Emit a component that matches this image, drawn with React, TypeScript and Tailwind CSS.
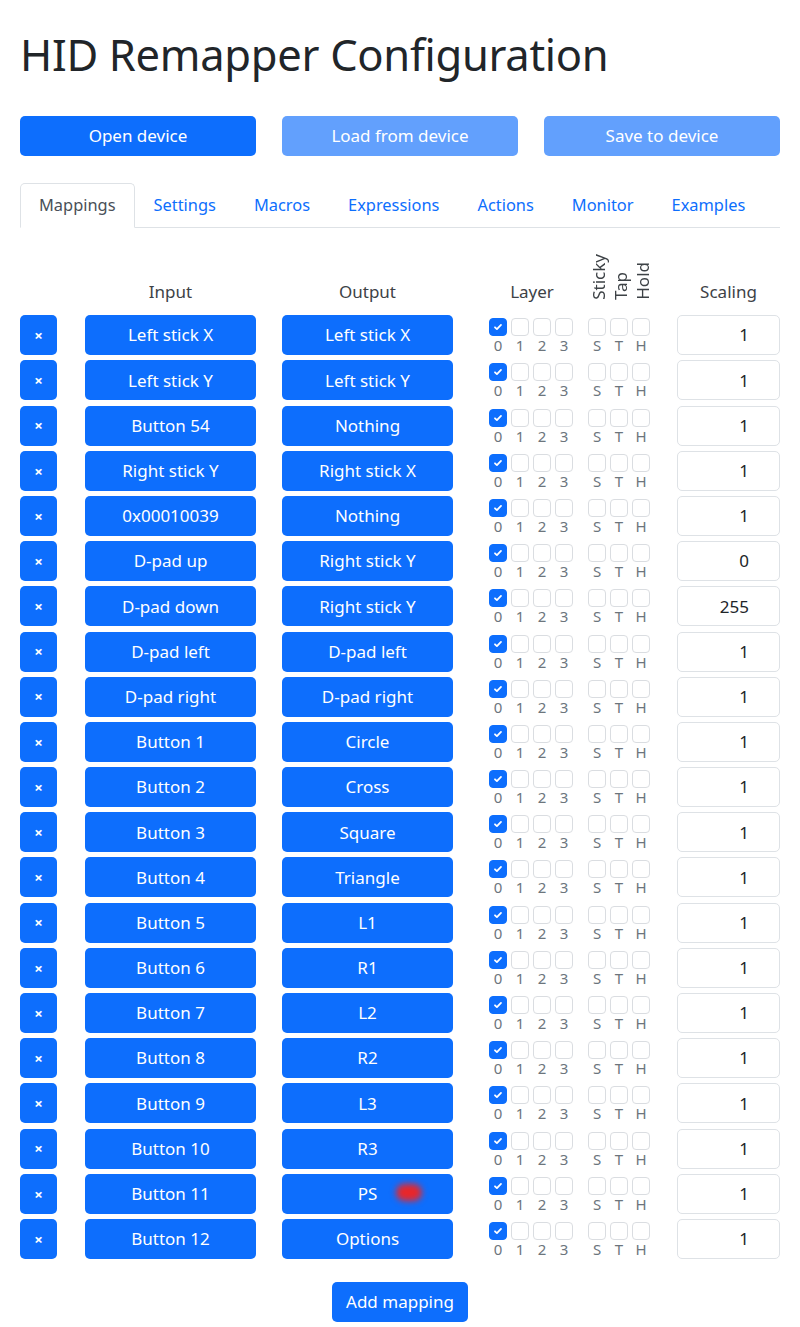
import React from "react"

const rows: [string, string, string][] = [
  ["Left stick X", "Left stick X", "1"],
  ["Left stick Y", "Left stick Y", "1"],
  ["Button 54", "Nothing", "1"],
  ["Right stick Y", "Right stick X", "1"],
  ["0x00010039", "Nothing", "1"],
  ["D-pad up", "Right stick Y", "0"],
  ["D-pad down", "Right stick Y", "255"],
  ["D-pad left", "D-pad left", "1"],
  ["D-pad right", "D-pad right", "1"],
  ["Button 1", "Circle", "1"],
  ["Button 2", "Cross", "1"],
  ["Button 3", "Square", "1"],
  ["Button 4", "Triangle", "1"],
  ["Button 5", "L1", "1"],
  ["Button 6", "R1", "1"],
  ["Button 7", "L2", "1"],
  ["Button 8", "R2", "1"],
  ["Button 9", "L3", "1"],
  ["Button 10", "R3", "1"],
  ["Button 11", "PS", "1"],
  ["Button 12", "Options", "1"],
]

const tabs = ["Mappings", "Settings", "Macros", "Expressions", "Actions", "Monitor", "Examples"]

function Check({ label, checked }: { label: string; checked?: boolean }) {
  return (
    <div className="flex flex-col items-center w-[18px] mr-[4px]">
      <div
        className={`w-[18px] h-[18px] rounded-[4px] border flex items-center justify-center ${
          checked ? "bg-[#0d6efd] border-[#0d6efd]" : "bg-white border-[#dadde1]"
        }`}
      >
        {checked && (
          <svg width="12" height="12" viewBox="0 0 20 20">
            <path d="M5 10.5l3.2 3L15 6.5" fill="none" stroke="white" strokeWidth="3" strokeLinecap="round" strokeLinejoin="round" />
          </svg>
        )}
      </div>
      <span className="text-[15px] leading-[16px] text-[#6c757d] mt-[1px]">{label}</span>
    </div>
  )
}

function Blue({ children, w }: { children: React.ReactNode; w: string }) {
  return (
    <div className={`${w} h-[40px] rounded-[5px] bg-[#0d6efd] text-white text-[17px] flex items-center justify-center`}>
      {children}
    </div>
  )
}

export default function App() {
  return (
    <div className="px-[20px] pb-[5px] bg-white text-[#212529]" style={{ fontFamily: '"Noto Sans", sans-serif' }}>
      <h1 className="pt-[26px] text-[43.5px] leading-[56px] font-normal tracking-[-0.3px]">HID Remapper Configuration</h1>

      <div className="mt-[34px] grid grid-cols-3 gap-x-[26px]">
        <button className="h-[40px] rounded-[5px] bg-[#0d6efd] text-white text-[17px]">Open device</button>
        <button className="h-[40px] rounded-[5px] bg-[#62a0fd] text-white text-[17px]">Load from device</button>
        <button className="h-[40px] rounded-[5px] bg-[#62a0fd] text-white text-[17px]">Save to device</button>
      </div>

      <div className="mt-[27px] flex border-b border-[#dee2e6]">
        {tabs.map((t, i) => (
          <div
            key={t}
            className={`h-[45px] px-[18px] flex items-center text-[16.4px] -mb-px rounded-t-[5px] border ${
              i === 0 ? "border-[#dee2e6] border-b-white bg-white text-[#495057]" : "border-transparent text-[#0d6efd]"
            }`}
          >
            {t}
          </div>
        ))}
      </div>

      <div className="mt-[22px] grid grid-cols-[65px_197px_207px_99px_89px_103px] gap-y-[5.2px]">
        <div className="h-[60px]" />
        <div className="w-[171px] flex items-end justify-center pb-[6px] text-[17px] text-[#3d4246]">Input</div>
        <div className="w-[171px] flex items-end justify-center pb-[6px] text-[17px] text-[#3d4246]">Output</div>
        <div className="w-[86px] flex items-end justify-center pb-[6px] text-[17px] text-[#3d4246]">Layer</div>
        <div className="flex items-end pb-[10px]">
          {["Sticky", "Tap", "Hold"].map((s) => (
            <div key={s} className="w-[22px] flex justify-center">
              <span className="text-[17px] leading-[20px] text-[#3d4246] [writing-mode:vertical-rl] rotate-180">{s}</span>
            </div>
          ))}
        </div>
        <div className="flex items-end justify-center pb-[6px] text-[17px] text-[#3d4246]">Scaling</div>

        {rows.map(([inp, out, sc]) => (
          <React.Fragment key={inp}>
            <Blue w="w-[37px]">
              <span className="text-[15px] font-bold">×</span>
            </Blue>
            <Blue w="w-[171px]">{inp}</Blue>
            <Blue w="w-[171px]">
              <span className="relative">
                {out}
                {out === "PS" && (
                  <span className="absolute left-[38px] top-[3px] w-[26px] h-[17px] rounded-full bg-[#e8262a] blur-[3px]" />
                )}
              </span>
            </Blue>
            <div className="flex pt-[3px]">
              <Check label="0" checked />
              <Check label="1" />
              <Check label="2" />
              <Check label="3" />
            </div>
            <div className="flex pt-[3px]">
              <Check label="S" />
              <Check label="T" />
              <Check label="H" />
            </div>
            <div className="h-[40px] rounded-[5px] border border-[#dee2e6] flex items-center justify-end pr-[30px] text-[17px]">
              {sc}
            </div>
          </React.Fragment>
        ))}
      </div>

      <div className="mt-[23px] flex justify-center">
        <button className="h-[40px] px-[14px] rounded-[5px] bg-[#0d6efd] text-white text-[17px]">Add mapping</button>
      </div>
    </div>
  )
}
